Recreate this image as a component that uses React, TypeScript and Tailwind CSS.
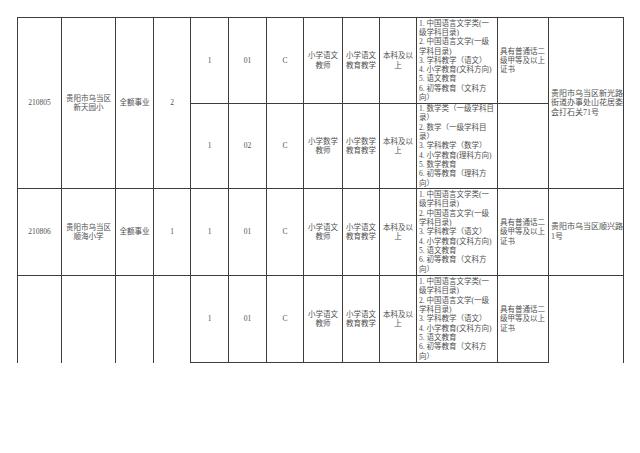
import type { ReactNode } from 'react'

const majorsChinese = [
  '1. 中国语言文学类(一',
  '级学科目录)',
  '2. 中国语言文学(一级',
  '学科目录)',
  '3. 学科教学（语文）',
  '4. 小学教育(文科方向)',
  '5. 语文教育',
  '6. 初等教育（文科方',
  '向）',
]

const majorsMath = [
  '1. 数学类（一级学科目',
  '录）',
  '2. 数学（一级学科目',
  '录）',
  '3. 学科教学（数学）',
  '4. 小学教育(理科方向)',
  '5. 数学教育',
  '6. 初等教育（理科方',
  '向）',
]

const cert = ['具有普通话二', '级甲等及以上', '证书']

const colWidths = [44, 54, 38, 37, 38, 38, 37, 39, 37, 37, 81, 51, 75]

function Lines({ lines }: { lines: string[] }) {
  return (
    <>
      {lines.map((l, i) => (
        <div key={i} className="whitespace-nowrap">
          {l}
        </div>
      ))}
    </>
  )
}

function Td({
  children,
  rowSpan,
  left,
  noBottom,
  className = '',
}: {
  children?: ReactNode
  rowSpan?: number
  left?: boolean
  noBottom?: boolean
  className?: string
}) {
  return (
    <td
      rowSpan={rowSpan}
      className={`border border-[#3d3d3d] p-0 align-middle ${left ? 'pl-[2px] text-left' : 'text-center'} ${
        noBottom ? 'border-b-0' : ''
      } ${className}`}
    >
      {children}
    </td>
  )
}

function JobCells({ n, code, post, subject, majors, withCert }: {
  n: string
  code: string
  post: string[]
  subject: string[]
  majors: string[]
  withCert: boolean
}) {
  return (
    <>
      <Td>{n}</Td>
      <Td>{code}</Td>
      <Td>C</Td>
      <Td>
        <Lines lines={post} />
      </Td>
      <Td>
        <Lines lines={subject} />
      </Td>
      <Td>
        <Lines lines={['本科及以', '上']} />
      </Td>
      <Td left>
        <Lines lines={majors} />
      </Td>
      <Td left>{withCert && <Lines lines={cert} />}</Td>
    </>
  )
}

export default function App() {
  return (
    <div className="h-[453px] w-[640px] bg-white pl-[17px] pt-[17px]">
      <table
        className="table-fixed border-collapse text-[7.5px] leading-[9.3px] text-[#505050]"
        style={{ width: 606, fontFamily: '"Liberation Serif", "Noto Sans CJK SC", serif' }}
      >
        <colgroup>
          {colWidths.map((w, i) => (
            <col key={i} style={{ width: w }} />
          ))}
        </colgroup>
        <tbody>
          <tr className="h-[86px]">
            <Td rowSpan={2}>210805</Td>
            <Td rowSpan={2}>
              <Lines lines={['贵阳市乌当区', '新天园小']} />
            </Td>
            <Td rowSpan={2}>全额事业</Td>
            <Td rowSpan={2}>2</Td>
            <JobCells
              n="1"
              code="01"
              post={['小学语文', '教师']}
              subject={['小学语文', '教育教学']}
              majors={majorsChinese}
              withCert
            />
            <Td rowSpan={2} left className="text-[8px] leading-[9.6px]">
              <Lines lines={['贵阳市乌当区新光路', '街道办事处山花居委', '会打石关71号']} />
            </Td>
          </tr>
          <tr className="h-[85px]">
            <JobCells
              n="1"
              code="02"
              post={['小学数学', '教师']}
              subject={['小学数学', '教育教学']}
              majors={majorsMath}
              withCert={false}
            />
          </tr>
          <tr className="h-[87px]">
            <Td>210806</Td>
            <Td>
              <Lines lines={['贵阳市乌当区', '顺海小学']} />
            </Td>
            <Td>全额事业</Td>
            <Td>1</Td>
            <JobCells
              n="1"
              code="01"
              post={['小学语文', '教师']}
              subject={['小学语文', '教育教学']}
              majors={majorsChinese}
              withCert
            />
            <Td left className="text-[8px] leading-[9.6px]">
              <Lines lines={['贵阳市乌当区顺兴路', '1号']} />
            </Td>
          </tr>
          <tr className="h-[87px]">
            <Td noBottom />
            <Td noBottom />
            <Td noBottom />
            <Td noBottom />
            <JobCells
              n="1"
              code="01"
              post={['小学语文', '教师']}
              subject={['小学语文', '教育教学']}
              majors={majorsChinese}
              withCert
            />
            <Td noBottom />
          </tr>
        </tbody>
      </table>
    </div>
  )
}
